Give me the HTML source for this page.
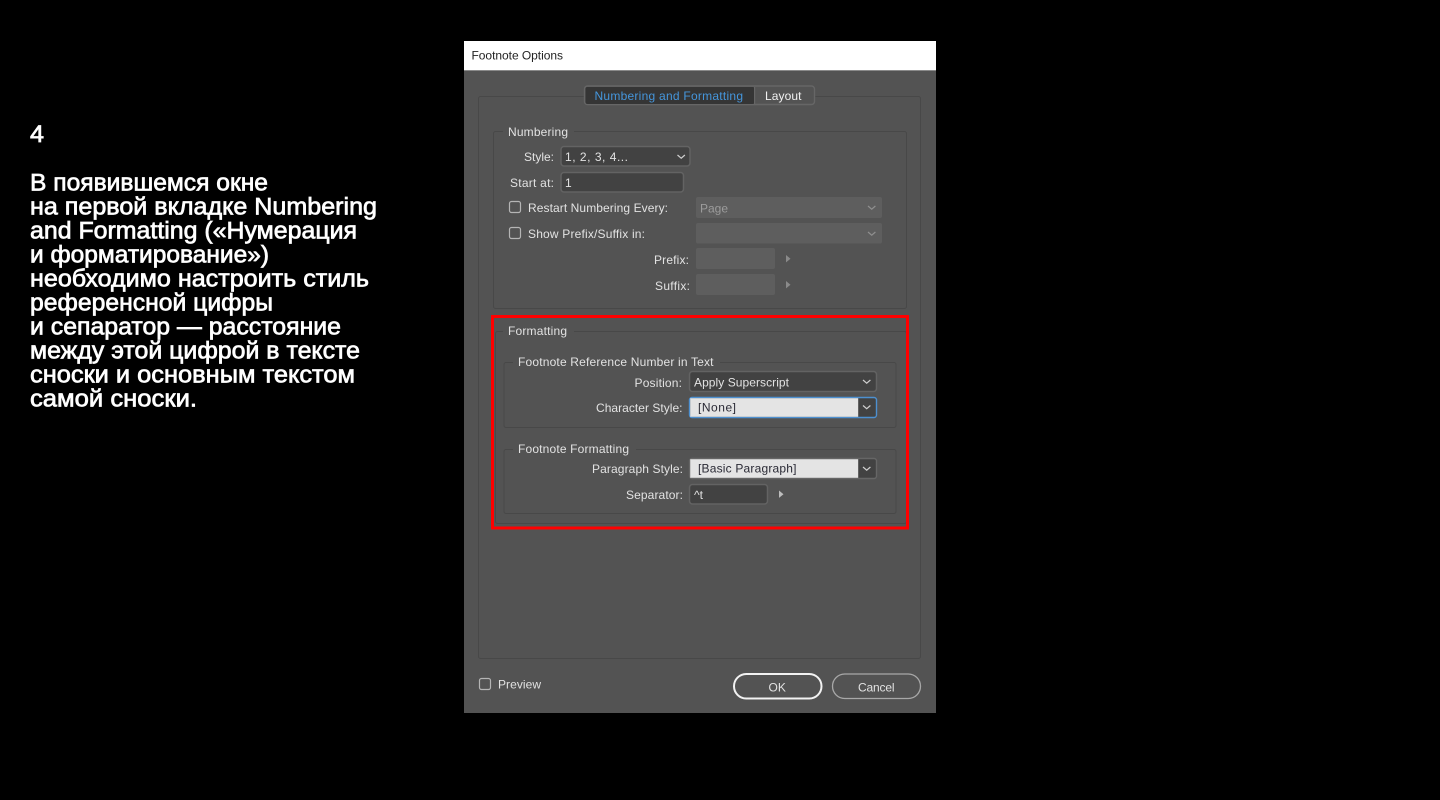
<!DOCTYPE html>
<html lang="ru">
<head>
<meta charset="utf-8">
<title>Footnote Options</title>
<style>
html,body{margin:0;padding:0;background:#000;width:1440px;height:800px;overflow:hidden}
svg{display:block}
.h text{font-family:"Liberation Sans","DejaVu Sans",sans-serif;font-size:24px;font-weight:400;fill:#fff;stroke:#fff;stroke-width:.7px}
.u text{font-family:"Liberation Sans","DejaVu Sans",sans-serif;font-size:12px;fill:#e2e2e2;stroke:none}
.g{fill:none;stroke:#484848;stroke-width:1}
.f{fill:#424242;stroke:#636363;stroke-width:1.5}
.d{fill:#5e5e5e;stroke:none}
.c{fill:none;stroke:#cfcfcf;stroke-width:1.2}
.cd{fill:none;stroke:#8f8f8f;stroke-width:1.2}
.b{fill:#535353;stroke:#a8a8a8;stroke-width:1.3}
</style>
</head>
<body>
<svg width="1440" height="800" viewBox="0 0 1440 800" xmlns="http://www.w3.org/2000/svg">
<rect width="1440" height="800" fill="#000"/>

<g class="h">
<text x="30" y="142" textLength="14" lengthAdjust="spacingAndGlyphs">4</text>
<text x="30" y="190.500" textLength="238" lengthAdjust="spacingAndGlyphs">В появившемся окне</text>
<text x="30" y="214.500" textLength="347" lengthAdjust="spacingAndGlyphs">на первой вкладке Numbering</text>
<text x="30" y="238.500" textLength="327" lengthAdjust="spacingAndGlyphs">and Formatting («Нумерация</text>
<text x="30" y="262.500" textLength="239" lengthAdjust="spacingAndGlyphs">и форматирование»)</text>
<text x="30" y="286.500" textLength="339" lengthAdjust="spacingAndGlyphs">необходимо настроить стиль</text>
<text x="30" y="310.500" textLength="243" lengthAdjust="spacingAndGlyphs">референсной цифры</text>
<text x="30" y="334.500" textLength="311" lengthAdjust="spacingAndGlyphs">и сепаратор — расстояние</text>
<text x="30" y="358.500" textLength="330" lengthAdjust="spacingAndGlyphs">между этой цифрой в тексте</text>
<text x="30" y="382.500" textLength="325" lengthAdjust="spacingAndGlyphs">сноски и основным текстом</text>
<text x="30" y="406.500" textLength="167" lengthAdjust="spacingAndGlyphs">самой сноски.</text>
</g>

<!-- dialog -->
<rect x="464" y="41" width="472" height="672" fill="#535353"/>
<rect x="464" y="41" width="472" height="29" fill="#fff"/>
<rect x="464" y="70" width="472" height="1" fill="#8a8a8a"/>

<!-- groups -->
<rect class="g" x="478.500" y="96.500" width="442" height="562" rx="2"/>
<rect class="g" x="493.500" y="131.500" width="413" height="177" rx="2"/>
<rect class="g" x="495.500" y="331.500" width="411" height="192" rx="2"/>
<rect class="g" x="504" y="362.500" width="392" height="65" rx="2"/>
<rect class="g" x="504" y="449.500" width="392" height="64" rx="2"/>
<rect x="503" y="128" width="71" height="8" fill="#535353"/>
<rect x="503" y="328" width="71" height="8" fill="#535353"/>
<rect x="513" y="359" width="207" height="8" fill="#535353"/>
<rect x="513" y="446" width="123" height="8" fill="#535353"/>

<!-- tabs -->
<rect x="584.500" y="86" width="230" height="18.500" rx="3" fill="#535353" stroke="#666" stroke-width="1.400"/>
<rect x="585.500" y="87" width="169" height="17" rx="2" fill="#353535"/>
<rect x="754" y="87" width="1.200" height="17" fill="#666"/>

<!-- numbering controls -->
<rect class="f" x="561" y="146.500" width="129" height="19.500" rx="3"/>
<path class="c" d="M677.500 155l3.700 3.200 3.700-3.200"/>
<rect class="f" x="561" y="172.500" width="122.500" height="19.500" rx="3"/>
<rect x="509.500" y="201.500" width="11" height="11" rx="2" fill="#535353" stroke="#b5b5b5" stroke-width="1.200"/>
<rect x="509.500" y="227.500" width="11" height="11" rx="2" fill="#535353" stroke="#b5b5b5" stroke-width="1.200"/>
<rect class="d" x="696" y="197" width="186" height="21" rx="2"/>
<path class="cd" d="M868 206l3.700 3.200 3.700-3.200"/>
<rect class="d" x="696" y="223" width="186" height="20.500" rx="2"/>
<path class="cd" d="M868 232l3.700 3.200 3.700-3.200"/>
<rect class="d" x="696" y="248" width="79" height="21" rx="2"/>
<rect class="d" x="696" y="274" width="79" height="21" rx="2"/>
<path d="M786 255l4.500 3.700-4.500 3.700z" fill="#8a8a8a"/>
<path d="M786 281l4.500 3.700-4.500 3.700z" fill="#8a8a8a"/>

<!-- formatting controls -->
<rect class="f" x="689.500" y="371.500" width="187" height="20" rx="3"/>
<path class="c" d="M863 380l3.700 3.200 3.700-3.200"/>

<rect x="689.500" y="397.500" width="187" height="20" rx="2.500" fill="#424242" stroke="#4d90d0" stroke-width="1.400"/>
<rect x="690.200" y="398.200" width="168" height="18.600" fill="#e4e4e4"/>
<path class="c" d="M863 405.500l3.700 3.200 3.700-3.200"/>

<rect x="689.500" y="458.500" width="187" height="20" rx="2.500" fill="#424242" stroke="#666" stroke-width="1.400"/>
<rect x="690.200" y="459.200" width="168" height="18.600" fill="#e4e4e4"/>
<path class="c" d="M863 467l3.700 3.200 3.700-3.200"/>

<rect class="f" x="689.500" y="484.500" width="78" height="19.500" rx="3"/>
<path d="M779 490.500l4.500 3.700-4.500 3.700z" fill="#bdbdbd"/>

<!-- highlight -->
<rect x="492.500" y="316.500" width="415" height="211.500" fill="none" stroke="#f00" stroke-width="3"/>

<!-- footer -->
<rect x="479.500" y="678.500" width="11" height="11" rx="2" fill="#535353" stroke="#b5b5b5" stroke-width="1.200"/>
<rect x="734" y="674" width="87.500" height="24.500" rx="12.250" fill="#535353" stroke="#f2f2f2" stroke-width="2"/>
<rect class="b" x="832.500" y="674" width="88" height="24.500" rx="12.250"/>

<g class="u">
<text x="471.500" y="59.500" textLength="91.500" lengthAdjust="spacing" style="fill:#222">Footnote Options</text>
<text x="594.500" y="100" textLength="148.500" lengthAdjust="spacing" style="fill:#4596dc">Numbering and Formatting</text>
<text x="765" y="100" textLength="36.500" lengthAdjust="spacing" style="fill:#f0f0f0">Layout</text>
<text x="508" y="136" textLength="60" lengthAdjust="spacing">Numbering</text>
<text x="524" y="161" textLength="30" lengthAdjust="spacing">Style:</text>
<text x="565" y="161" textLength="63" lengthAdjust="spacing">1, 2, 3, 4...</text>
<text x="510" y="187" textLength="44" lengthAdjust="spacing">Start at:</text>
<text x="565" y="187">1</text>
<text x="528" y="212" textLength="140" lengthAdjust="spacing">Restart Numbering Every:</text>
<text x="700" y="212.500" textLength="28" lengthAdjust="spacing" style="fill:#9c9c9c">Page</text>
<text x="528" y="238" textLength="117" lengthAdjust="spacing">Show Prefix/Suffix in:</text>
<text x="654" y="264" textLength="35" lengthAdjust="spacing">Prefix:</text>
<text x="655" y="290" textLength="35" lengthAdjust="spacing">Suffix:</text>
<text x="508" y="335" textLength="59" lengthAdjust="spacing">Formatting</text>
<text x="518" y="366" textLength="195.500" lengthAdjust="spacing">Footnote Reference Number in Text</text>
<text x="634.500" y="387" textLength="47.500" lengthAdjust="spacing">Position:</text>
<text x="694" y="386.500" textLength="95" lengthAdjust="spacing">Apply Superscript</text>
<text x="596" y="412" textLength="86.500" lengthAdjust="spacing">Character Style:</text>
<text x="698" y="411.500" textLength="38" lengthAdjust="spacing" style="fill:#2a2a35">[None]</text>
<text x="518" y="453" textLength="111" lengthAdjust="spacing">Footnote Formatting</text>
<text x="592" y="473" textLength="91" lengthAdjust="spacing">Paragraph Style:</text>
<text x="698" y="472.500" textLength="98.500" lengthAdjust="spacing" style="fill:#2a2a35">[Basic Paragraph]</text>
<text x="626" y="499" textLength="57" lengthAdjust="spacing">Separator:</text>
<text x="694" y="499">^t</text>
<text x="498" y="688.500" textLength="43" lengthAdjust="spacing">Preview</text>
<text x="768.500" y="691.700">OK</text>
<text x="858" y="691.700" textLength="36.500" lengthAdjust="spacing">Cancel</text>
</g>
</svg>
</body>
</html>
